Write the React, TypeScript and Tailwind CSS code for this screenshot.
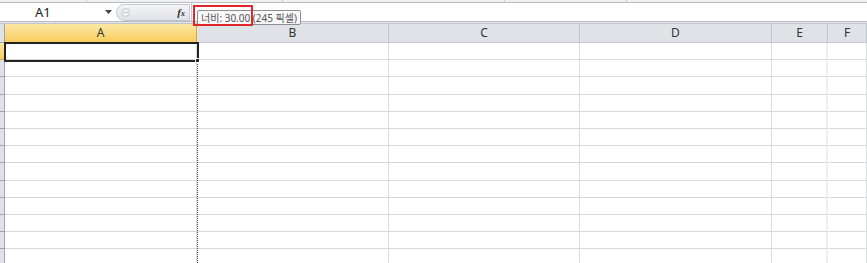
import React from "react";

const columns = [
  { label: "A", width: "w-[192px]", active: true },
  { label: "B", width: "w-[192px]", active: false },
  { label: "C", width: "w-[191px]", active: false },
  { label: "D", width: "w-[192px]", active: false },
  { label: "E", width: "w-[56px]", active: false },
  { label: "F", width: "flex-1", active: false },
];

const rowHeights = [
  "h-[17px]",
  "h-[17px]",
  "h-[18px]",
  "h-[17px]",
  "h-[17px]",
  "h-[17px]",
  "h-[17px]",
  "h-[18px]",
  "h-[17px]",
  "h-[17px]",
  "h-[17px]",
  "h-[17px]",
  "h-[17px]",
];

const App: React.FC = () => {
  return (
    <div className="relative w-[867px] h-[263px] overflow-hidden bg-white font-['Noto_Sans','Noto_Sans_CJK_KR',sans-serif]">
      {/* ribbon remainder */}
      <div className="flex h-[3px] bg-[#eef0f3] border-b border-[#b9bec5]">
        <div className="w-[87px] border-r border-[#c8ccd2]" />
        <div className="w-[196px] border-r border-[#c8ccd2]" />
        <div className="w-[222px] border-r border-[#c8ccd2]" />
        <div className="w-[122px] border-r border-[#c8ccd2]" />
      </div>

      {/* formula bar */}
      <div className="flex h-[19px] items-center bg-white border-b border-[#b6bbc2]">
        <div className="flex w-[116px] h-full items-center">
          <span className="pl-[35px] text-[13px] leading-none text-[#222]">A1</span>
          <svg className="ml-auto mr-[4px]" width="7" height="4" viewBox="0 0 7 4">
            <path d="M0 0h7L3.5 4z" fill="#444" />
          </svg>
        </div>
        <div className="flex w-[74px] h-[17px] items-center rounded-l-full border border-[#c3c7cd] bg-gradient-to-b from-[#f3f4f6] to-[#dfe2e6]">
          <div className="ml-[4px] w-[9px] h-[9px] rounded-full border border-[#c4c8ce] bg-[#eef0f2] flex items-center justify-center">
            <div className="w-[5px] h-px bg-[#c4c8ce]" />
          </div>
          <span className="ml-auto mr-[4px] text-[11px] leading-none italic font-bold font-['Liberation_Serif',serif] text-[#333]">
            f<span className="text-[8px]">x</span>
          </span>
        </div>
        <div className="flex-1 h-full border-l border-[#c3c7cd] ml-[1px]" />
      </div>

      <div className="h-[2px] bg-[#e3e6ea] border-b border-[#c2c6cc]" />

      {/* column headers */}
      <div className="flex h-[19px]">
        <div className="w-[5px] bg-[#dfe3e8] border-r border-b border-[#9ea5ae]" />
        {columns.map((col) => (
          <div
            key={col.label}
            className={
              col.active
                ? `${col.width} flex items-center justify-center bg-gradient-to-b from-[#fde7a4] to-[#f9cc5c] border-r border-b border-[#e2a93a] text-[12px] text-[#333]`
                : `${col.width} flex items-center justify-center bg-[#dfe3e8] border-r border-b border-[#c3c8ce] text-[12px] text-[#333]`
            }
          >
            {col.label}
          </div>
        ))}
      </div>

      {/* rows */}
      <div className="flex flex-col">
        {rowHeights.map((h, i) => (
          <div key={i} className={`flex ${h}`}>
            <div
              className={
                i === 0
                  ? "w-[5px] bg-gradient-to-b from-[#fde7a4] to-[#f9cc5c] border-r border-b border-[#e2a93a]"
                  : "w-[5px] bg-[#dfe3e8] border-r border-b border-[#9ea5ae]"
              }
            />
            {columns.map((col) => (
              <div
                key={col.label}
                className={
                  col.label === "E"
                    ? `${col.width} border-r-2 border-r-[#eeeeee] border-b border-b-[#d6d8da]`
                    : `${col.width} border-r border-r-[#dadcdd] border-b border-b-[#d6d8da]`
                }
              />
            ))}
          </div>
        ))}
      </div>

      {/* column resize guide */}
      <div className="absolute left-[197px] top-[43px] bottom-0 border-l border-dotted border-[#444]" />

      {/* active cell A1 */}
      <div className="absolute left-[4px] top-[42px] w-[195px] h-[20px] border-2 border-[#222]" />
      <div className="absolute left-[195px] top-[58px] w-[5px] h-[5px] bg-[#222] border border-white" />

      {/* width tooltip */}
      <div className="absolute left-[197px] top-[10px] w-[104px] h-[15px] flex items-center rounded-[2px] border border-[#8f8f8f] bg-[#f8f8f8] pl-[3px] text-[10px] leading-none text-[#555] whitespace-nowrap">
        너비: 30.00 (245 픽셀)
      </div>
      <div className="absolute left-[193px] top-[5px] w-[60px] h-[21px] border-2 border-[#e3262b]" />
    </div>
  );
};

export default App;
